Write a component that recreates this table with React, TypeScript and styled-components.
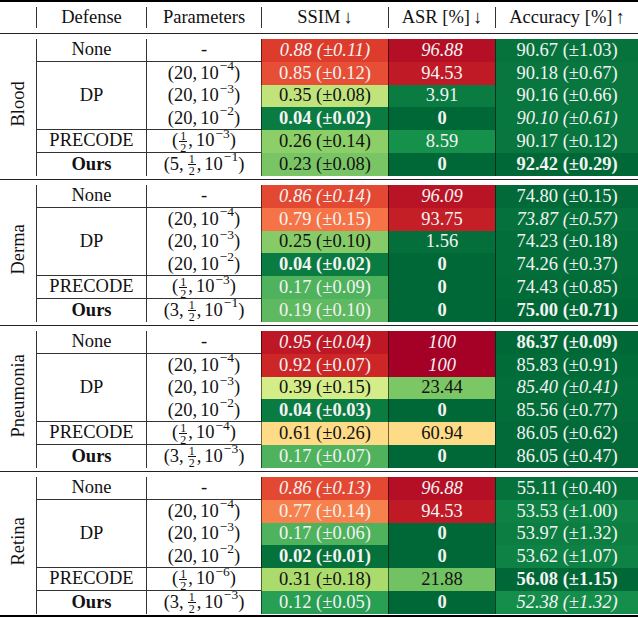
import React from 'react';
import styled, { createGlobalStyle, css } from 'styled-components';

const GlobalStyle = createGlobalStyle`
  html, body { margin: 0; padding: 0; background: #fff; }
  body { font-family: "Liberation Serif", "Times New Roman", serif; color: #111; }
`;

const COLS = '36px 110px 115px 127px 107px 143px';

const Table = styled.div`
  width: 638px;
  font-size: 18.5px;
  border-top: 2px solid #000;
  border-bottom: 2px solid #000;
`;

const HeaderRow = styled.div`
  display: grid;
  grid-template-columns: ${COLS};
  height: 30.5px;
  align-items: center;
  border-bottom: 1px solid #222;
`;

const HeadCell = styled.div<{ $first?: boolean }>`
  height: 21px;
  display: flex;
  align-items: center;
  justify-content: center;
  white-space: nowrap;
  ${(p) => !p.$first && css`border-left: 1px solid #333;`}
`;

const Arrow = styled.span`
  margin-left: 3px;
`;

const Section = styled.div<{ $last?: boolean }>`
  display: grid;
  grid-template-columns: ${COLS};
  grid-template-rows: repeat(6, 22.75px);
  padding-top: 5.5px;
  padding-bottom: ${(p) => (p.$last ? '1.5px' : '3px')};
  ${(p) => !p.$last && css`border-bottom: 1px solid #222;`}
`;

const DatasetLabel = styled.div`
  grid-column: 1;
  grid-row: 1 / span 6;
  display: flex;
  align-items: center;
  justify-content: center;
  writing-mode: vertical-rl;
  transform: rotate(180deg);
  white-space: nowrap;
  padding-top: 7px;
`;

const DefenseCell = styled.div<{ $row: number; $span: number; $rule: boolean; $bold?: boolean }>`
  grid-column: 2;
  grid-row: ${(p) => p.$row} / span ${(p) => p.$span};
  display: flex;
  align-items: center;
  justify-content: center;
  border-left: 1px solid #333;
  ${(p) => p.$rule && css`border-bottom: 1px solid #333;`}
  font-weight: ${(p) => (p.$bold ? 700 : 400)};
`;

const ParamCell = styled.div<{ $row: number; $rule: boolean }>`
  grid-column: 3;
  grid-row: ${(p) => p.$row};
  display: flex;
  align-items: center;
  justify-content: center;
  white-space: nowrap;
  border-left: 1px solid #333;
  ${(p) => p.$rule && css`border-bottom: 1px solid #333;`}
`;

const DataCell = styled.div<{ $col: number; $row: number; $bg: string; $light: boolean; $w: '' | 'b' | 'i' }>`
  grid-column: ${(p) => p.$col};
  grid-row: ${(p) => p.$row};
  display: flex;
  align-items: center;
  justify-content: center;
  white-space: nowrap;
  background: ${(p) => p.$bg};
  color: ${(p) => (p.$light ? '#f3f3f3' : '#111')};
  border-left: 1px solid rgba(0, 0, 0, 0.55);
  font-weight: ${(p) => (p.$w === 'b' ? 700 : 400)};
  font-style: ${(p) => (p.$w === 'i' ? 'italic' : 'normal')};
`;

const Sup = styled.span`
  display: inline-block;
  font-size: 13.5px;
  line-height: 1;
  transform: translateY(-7px);
  margin-left: 1px;
`;

const Comma = styled.span`
  margin-right: 3px;
`;

const Frac = styled.span`
  display: inline-flex;
  flex-direction: column;
  align-items: center;
  font-size: 12px;
  line-height: 10px;
  vertical-align: middle;
  margin: 0 1px;
  transform: translateY(1px);
`;

const Num = styled.span`
  border-bottom: 1px solid #111;
  padding: 0 1px;
`;

const Den = styled.span`
  padding-top: 1px;
`;

const RDYLGN = ['#a50026', '#d73027', '#f46d43', '#fdae61', '#fee08b', '#ffffbf', '#d9ef8b', '#a6d96a', '#66bd63', '#1a9850', '#006837'];

function hex(h: string) {
  return [1, 3, 5].map((i) => parseInt(h.slice(i, i + 2), 16));
}

function cmap(t: number) {
  const x = Math.max(0, Math.min(1, t)) * 10;
  const i = Math.min(9, Math.floor(x));
  const f = x - i;
  const a = hex(RDYLGN[i]);
  const b = hex(RDYLGN[i + 1]);
  const c = a.map((v, k) => Math.round(v + (b[k] - v) * f));
  return `rgb(${c[0]},${c[1]},${c[2]})`;
}

type W = '' | 'b' | 'i';
type P = null | { lead?: string; half?: boolean; exp: number };
type Row = {
  params: P;
  ssim: [string, string, W];
  asr: [string, W];
  acc: [string, string, W];
};

type Dataset = { name: string; rows: Row[] };

const DATA: Dataset[] = [
  {
    name: 'Blood',
    rows: [
      { params: null, ssim: ['0.88', '0.11', 'i'], asr: ['96.88', 'i'], acc: ['90.67', '1.03', ''] },
      { params: { lead: '20', exp: 4 }, ssim: ['0.85', '0.12', ''], asr: ['94.53', ''], acc: ['90.18', '0.67', ''] },
      { params: { lead: '20', exp: 3 }, ssim: ['0.35', '0.08', ''], asr: ['3.91', ''], acc: ['90.16', '0.66', ''] },
      { params: { lead: '20', exp: 2 }, ssim: ['0.04', '0.02', 'b'], asr: ['0', 'b'], acc: ['90.10', '0.61', 'i'] },
      { params: { half: true, exp: 3 }, ssim: ['0.26', '0.14', ''], asr: ['8.59', ''], acc: ['90.17', '0.12', ''] },
      { params: { lead: '5', half: true, exp: 1 }, ssim: ['0.23', '0.08', ''], asr: ['0', 'b'], acc: ['92.42', '0.29', 'b'] },
    ],
  },
  {
    name: 'Derma',
    rows: [
      { params: null, ssim: ['0.86', '0.14', 'i'], asr: ['96.09', 'i'], acc: ['74.80', '0.15', ''] },
      { params: { lead: '20', exp: 4 }, ssim: ['0.79', '0.15', ''], asr: ['93.75', ''], acc: ['73.87', '0.57', 'i'] },
      { params: { lead: '20', exp: 3 }, ssim: ['0.25', '0.10', ''], asr: ['1.56', ''], acc: ['74.23', '0.18', ''] },
      { params: { lead: '20', exp: 2 }, ssim: ['0.04', '0.02', 'b'], asr: ['0', 'b'], acc: ['74.26', '0.37', ''] },
      { params: { half: true, exp: 3 }, ssim: ['0.17', '0.09', ''], asr: ['0', 'b'], acc: ['74.43', '0.85', ''] },
      { params: { lead: '3', half: true, exp: 1 }, ssim: ['0.19', '0.10', ''], asr: ['0', 'b'], acc: ['75.00', '0.71', 'b'] },
    ],
  },
  {
    name: 'Pneumonia',
    rows: [
      { params: null, ssim: ['0.95', '0.04', 'i'], asr: ['100', 'i'], acc: ['86.37', '0.09', 'b'] },
      { params: { lead: '20', exp: 4 }, ssim: ['0.92', '0.07', ''], asr: ['100', 'i'], acc: ['85.83', '0.91', ''] },
      { params: { lead: '20', exp: 3 }, ssim: ['0.39', '0.15', ''], asr: ['23.44', ''], acc: ['85.40', '0.41', 'i'] },
      { params: { lead: '20', exp: 2 }, ssim: ['0.04', '0.03', 'b'], asr: ['0', 'b'], acc: ['85.56', '0.77', ''] },
      { params: { half: true, exp: 4 }, ssim: ['0.61', '0.26', ''], asr: ['60.94', ''], acc: ['86.05', '0.62', ''] },
      { params: { lead: '3', half: true, exp: 3 }, ssim: ['0.17', '0.07', ''], asr: ['0', 'b'], acc: ['86.05', '0.47', ''] },
    ],
  },
  {
    name: 'Retina',
    rows: [
      { params: null, ssim: ['0.86', '0.13', 'i'], asr: ['96.88', 'i'], acc: ['55.11', '0.40', ''] },
      { params: { lead: '20', exp: 4 }, ssim: ['0.77', '0.14', ''], asr: ['94.53', ''], acc: ['53.53', '1.00', ''] },
      { params: { lead: '20', exp: 3 }, ssim: ['0.17', '0.06', ''], asr: ['0', 'b'], acc: ['53.97', '1.32', ''] },
      { params: { lead: '20', exp: 2 }, ssim: ['0.02', '0.01', 'b'], asr: ['0', 'b'], acc: ['53.62', '1.07', ''] },
      { params: { half: true, exp: 6 }, ssim: ['0.31', '0.18', ''], asr: ['21.88', ''], acc: ['56.08', '1.15', 'b'] },
      { params: { lead: '3', half: true, exp: 3 }, ssim: ['0.12', '0.05', ''], asr: ['0', 'b'], acc: ['52.38', '1.32', 'i'] },
    ],
  },
];

const isLight = (t: number) => t < 0.3 || t > 0.8;

const Param: React.FC<{ p: P }> = ({ p }) => {
  if (!p) return <>-</>;
  return (
    <>
      (
      {p.lead && <Comma>{p.lead},</Comma>}
      {p.half && (
        <>
          <Frac>
            <Num>1</Num>
            <Den>2</Den>
          </Frac>
          <Comma>,</Comma>
        </>
      )}
      10<Sup>−{p.exp}</Sup>)
    </>
  );
};

const DEFENSES: { label: string; row: number; span: number; rule: boolean; bold?: boolean }[] = [
  { label: 'None', row: 1, span: 1, rule: true },
  { label: 'DP', row: 2, span: 3, rule: true },
  { label: 'PRECODE', row: 5, span: 1, rule: true },
  { label: 'Ours', row: 6, span: 1, rule: false, bold: true },
];

const PARAM_RULES = [true, false, false, true, true, false];

const SectionBlock: React.FC<{ d: Dataset; last: boolean }> = ({ d, last }) => {
  const maxAcc = Math.max(...d.rows.map((r) => parseFloat(r.acc[0])));
  return (
    <Section $last={last}>
      <DatasetLabel>{d.name}</DatasetLabel>
      {DEFENSES.map((df) => (
        <DefenseCell key={df.label} $row={df.row} $span={df.span} $rule={df.rule} $bold={df.bold}>
          {df.label}
        </DefenseCell>
      ))}
      {d.rows.map((r, i) => {
        const ts = 1 - parseFloat(r.ssim[0]);
        const ta = 1 - parseFloat(r.asr[0]) / 100;
        const tc = 1 - (1.2 * (maxAcc - parseFloat(r.acc[0]))) / maxAcc;
        return (
          <React.Fragment key={i}>
            <ParamCell $row={i + 1} $rule={PARAM_RULES[i]}>
              <Param p={r.params} />
            </ParamCell>
            <DataCell $col={4} $row={i + 1} $bg={cmap(ts)} $light={isLight(ts)} $w={r.ssim[2]}>
              {r.ssim[0]} (±{r.ssim[1]})
            </DataCell>
            <DataCell $col={5} $row={i + 1} $bg={cmap(ta)} $light={isLight(ta)} $w={r.asr[1]}>
              {r.asr[0]}
            </DataCell>
            <DataCell $col={6} $row={i + 1} $bg={cmap(tc)} $light={isLight(tc)} $w={r.acc[2]}>
              {r.acc[0]} (±{r.acc[1]})
            </DataCell>
          </React.Fragment>
        );
      })}
    </Section>
  );
};

export default function App() {
  return (
    <>
      <GlobalStyle />
      <Table>
        <HeaderRow>
          <HeadCell $first />
          <HeadCell>Defense</HeadCell>
          <HeadCell>Parameters</HeadCell>
          <HeadCell>
            SSIM<Arrow>↓</Arrow>
          </HeadCell>
          <HeadCell>
            ASR [%]<Arrow>↓</Arrow>
          </HeadCell>
          <HeadCell>
            Accuracy [%]<Arrow>↑</Arrow>
          </HeadCell>
        </HeaderRow>
        {DATA.map((d, i) => (
          <SectionBlock key={d.name} d={d} last={i === DATA.length - 1} />
        ))}
      </Table>
    </>
  );
}
